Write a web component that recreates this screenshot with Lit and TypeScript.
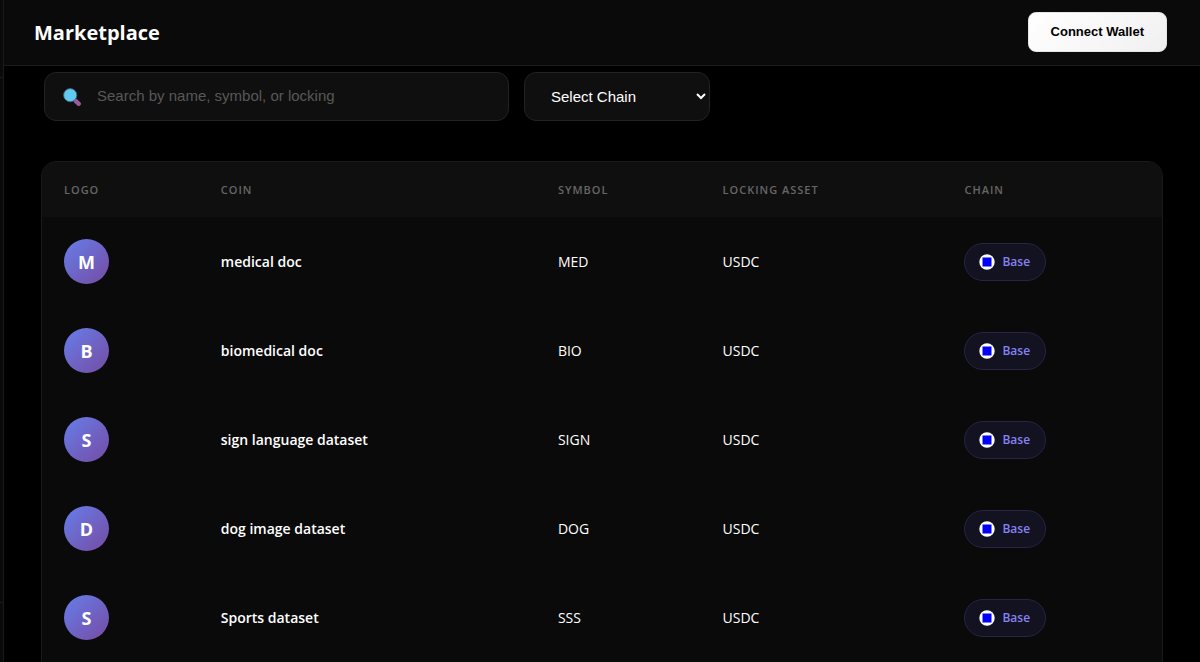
import { LitElement, html, css } from "lit";
import { customElement, property, state } from "lit/decorators.js";

interface Coin {
  name: string;
  symbol: string;
  asset: string;
  chain: string;
}

const COINS: Coin[] = [
  { name: "medical doc", symbol: "MED", asset: "USDC", chain: "Base" },
  { name: "biomedical doc", symbol: "BIO", asset: "USDC", chain: "Base" },
  { name: "sign language dataset", symbol: "SIGN", asset: "USDC", chain: "Base" },
  { name: "dog image dataset", symbol: "DOG", asset: "USDC", chain: "Base" },
  { name: "Sports dataset", symbol: "SSS", asset: "USDC", chain: "Base" },
];

@customElement("chain-badge")
export class ChainBadge extends LitElement {
  @property() name = "";

  static styles = css`
    :host {
      display: inline-flex;
      align-items: center;
      gap: 7px;
      box-sizing: border-box;
      height: 38px;
      padding: 0 15px 0 14px;
      border: 1px solid #272444;
      border-radius: 19px;
      background: #131220;
      color: #8583f5;
      font-size: 12px;
      font-weight: 600;
      vertical-align: middle;
    }
    svg {
      display: block;
      width: 16px;
      height: 16px;
    }
  `;

  render() {
    return html`
      <svg viewBox="0 0 16 16" aria-hidden="true">
        <circle cx="8" cy="8" r="7.7" fill="#fff" />
        <rect x="3.5" y="3.5" width="9" height="9" fill="#0000f5" />
      </svg>
      <span>${this.name}</span>
    `;
  }
}

@customElement("app-root")
export class AppRoot extends LitElement {
  @state() private query = "";

  static styles = css`
    :host {
      display: flex;
      height: 100vh;
      overflow: hidden;
      background: #000;
      color: #fff;
      font-family: "Segoe UI", "Open Sans", "Noto Sans", sans-serif;
      font-size: 14px;
    }
    * {
      box-sizing: border-box;
    }
    .rail {
      display: flex;
      flex-direction: column;
      flex: none;
      width: 4px;
      border-right: 1px solid #1a1a1a;
      background: #0a0a0a;
    }
    .rail-head {
      height: 78px;
      border-bottom: 1px solid #1a1a1a;
    }
    .rail-foot {
      height: 60px;
      margin-top: auto;
      border-top: 1px solid #1a1a1a;
    }
    .page {
      flex: 1;
      min-width: 0;
    }
    .top {
      display: flex;
      align-items: center;
      justify-content: space-between;
      height: 66px;
      padding: 0 33px 2px 30px;
      border-bottom: 1px solid #1a1a1a;
      background: #0a0a0a;
    }
    h1 {
      margin: 0;
      padding-top: 2px;
      font-size: 20px;
      line-height: 28px;
      font-weight: 700;
    }
    .connect {
      height: 40px;
      padding: 0 22px;
      border: 1px solid #e5e5e5;
      border-radius: 8px;
      background: linear-gradient(135deg, #fff, #f0f0f0);
      color: #000;
      font: 700 13px "Liberation Sans", Arial, sans-serif;
    }
    .filters {
      display: flex;
      gap: 15px;
      padding: 6px 40px 40px;
    }
    .search {
      display: flex;
      align-items: center;
      gap: 15px;
      width: 465px;
      height: 49px;
      padding: 0 17px;
      border: 1px solid #222;
      border-radius: 12px;
      background: #0f0f0f;
    }
    .search svg {
      flex: none;
      width: 20px;
      height: 20px;
    }
    input,
    select {
      font: 15px "Liberation Sans", Arial, sans-serif;
      color: #fff;
    }
    input {
      flex: 1;
      min-width: 0;
      padding: 0 0 2px;
      border: 0;
      outline: 0;
      background: none;
    }
    input::placeholder {
      color: #585858;
      opacity: 1;
    }
    select {
      width: 186px;
      height: 49px;
      padding: 0 0 0 22px;
      border: 1px solid #222;
      border-radius: 12px;
      background: #0f0f0f;
    }
    .card {
      margin: 0 37px;
      padding-bottom: 20px;
      border: 1px solid #1a1a1a;
      border-radius: 15px;
      background: #0a0a0a;
      overflow: hidden;
    }
    table {
      width: 100%;
      table-layout: fixed;
      border-collapse: collapse;
      text-align: left;
    }
    .c-logo { width: 14%; }
    .c-coin { width: 30.1%; }
    .c-symbol { width: 14.7%; }
    .c-asset { width: 21.6%; }
    th,
    td {
      padding: 0 22px;
    }
    th {
      height: 55px;
      background: #0f0f0f;
      color: #666;
      font-size: 11px;
      font-weight: 600;
      letter-spacing: 1px;
      text-transform: uppercase;
    }
    td {
      height: 89px;
    }
    .name {
      font-weight: 600;
    }
    .avatar {
      display: flex;
      align-items: center;
      justify-content: center;
      width: 45px;
      height: 45px;
      border-radius: 50%;
      background: linear-gradient(135deg, #667eea, #764ba2);
      font-size: 18px;
      font-weight: 700;
    }
  `;

  private onSearch(e: Event) {
    this.query = (e.target as HTMLInputElement).value.toLowerCase();
  }

  render() {
    const rows = COINS.filter((c) =>
      [c.name, c.symbol, c.asset].some((v) => v.toLowerCase().includes(this.query))
    );
    return html`
      <aside class="rail">
        <div class="rail-head"></div>
        <div class="rail-foot"></div>
      </aside>
      <main class="page">
        <header class="top">
          <h1>Marketplace</h1>
          <button class="connect" type="button">Connect Wallet</button>
        </header>
        <div class="filters">
          <label class="search">
            <svg viewBox="0 0 20 20" aria-hidden="true">
              <path d="M13.6 13.8 L16.8 16.8" stroke="#9a5a9f" stroke-width="4.4" stroke-linecap="round" />
              <circle cx="8.2" cy="8.2" r="6.6" fill="#62c9ef" stroke="#3c5a78" stroke-width="0.8" />
            </svg>
            <input
              type="text"
              aria-label="Search coins"
              placeholder="Search by name, symbol, or locking"
              @input=${this.onSearch}
            />
          </label>
          <select aria-label="Chain">
            <option>Select Chain</option>
            <option>Base</option>
          </select>
        </div>
        <section class="card">
          <table>
            <colgroup>
              <col class="c-logo" />
              <col class="c-coin" />
              <col class="c-symbol" />
              <col class="c-asset" />
              <col />
            </colgroup>
            <thead>
              <tr>
                <th>Logo</th>
                <th>Coin</th>
                <th>Symbol</th>
                <th>Locking Asset</th>
                <th>Chain</th>
              </tr>
            </thead>
            <tbody>
              ${rows.map(
                (c) => html`
                  <tr>
                    <td><div class="avatar">${c.name[0].toUpperCase()}</div></td>
                    <td class="name">${c.name}</td>
                    <td>${c.symbol}</td>
                    <td>${c.asset}</td>
                    <td><chain-badge name=${c.chain}></chain-badge></td>
                  </tr>
                `
              )}
            </tbody>
          </table>
        </section>
      </main>
    `;
  }
}
